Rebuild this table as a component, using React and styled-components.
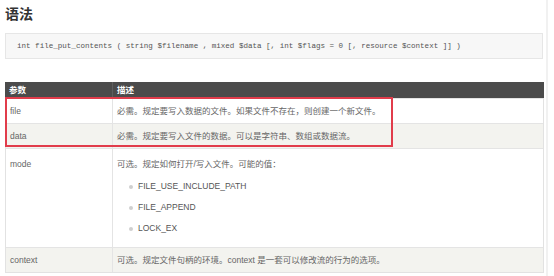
import React from 'react'
import styled, { createGlobalStyle } from 'styled-components'

const GlobalStyle = createGlobalStyle`
    html, body {
        margin: 0;
        padding: 0;
        background: #fff;
    }
    body {
        font-family: "Liberation Sans", "Noto Sans CJK SC", sans-serif;
        color: #555;
    }
`

const params = [
    { name: 'file', desc: '必需。规定要写入数据的文件。如果文件不存在，则创建一个新文件。' },
    { name: 'data', desc: '必需。规定要写入文件的数据。可以是字符串、数组或数据流。' },
    {
        name: 'mode',
        desc: '可选。规定如何打开/写入文件。可能的值：',
        values: ['FILE_USE_INCLUDE_PATH', 'FILE_APPEND', 'LOCK_EX'],
    },
    { name: 'context', desc: '可选。规定文件句柄的环境。context 是一套可以修改流的行为的选项。' },
]

export default function App() {
    return (
        <Page>
            <GlobalStyle />
            <Main>
                <Title>语法</Title>
                <CodeBox>
                    int file_put_contents ( string $filename , mixed $data [, int $flags = 0 [, resource $context ]] )
                </CodeBox>
                <TableWrap>
                    <HeadRow>
                        <HeadCell>参数</HeadCell>
                        <HeadCell $divider>描述</HeadCell>
                    </HeadRow>
                    {params.map((p, i) => (
                        <Row key={p.name} $striped={i % 2 === 1}>
                            <Cell $tall={!!p.values}>{p.name}</Cell>
                            <Cell $tall={!!p.values} $divider>
                                {p.desc}
                                {p.values && (
                                    <ValueList>
                                        {p.values.map((v) => <li key={v}>{v}</li>)}
                                    </ValueList>
                                )}
                            </Cell>
                        </Row>
                    ))}
                    <Highlight />
                </TableWrap>
            </Main>
        </Page>
    )
}

const Page = styled.div`
    width: 554px;
    height: 276px;
    display: flex;
    overflow: hidden;
`

const Main = styled.div`
    width: 548px;
    box-sizing: border-box;
    padding: 5px 3px 0 5px;
    border-right: 2px solid #f1f1f1;
`

const Title = styled.h2`
    margin: 0;
    font-size: 14px;
    line-height: 16px;
    font-weight: bold;
    color: #333;
    font-family: "Noto Sans CJK SC", sans-serif;
`

const CodeBox = styled.div`
    margin-top: 12px;
    height: 26px;
    box-sizing: border-box;
    border: 1px solid #e6e6e6;
    background: #f7f7f7;
    padding-left: 11px;
    font-family: "Liberation Mono", monospace;
    font-size: 7.55px;
    line-height: 24px;
    color: #555;
    white-space: nowrap;
`

const TableWrap = styled.div`
    position: relative;
    margin-top: 23px;
    width: 539px;
    border: 1px solid #e2e2e2;
    border-top: none;
    box-sizing: border-box;
`

const HeadRow = styled.div`
    display: grid;
    grid-template-columns: 107px 1fr;
    height: 16px;
    margin: 0 -1px;
    background: #4b4b4b;
`

const HeadCell = styled.div`
    padding: 0 4px;
    font-size: 8.5px;
    line-height: 16px;
    font-weight: bold;
    color: #fff;
    border-left: ${p => (p.$divider ? '1px solid #5e5e5e' : 'none')};
`

const Row = styled.div`
    display: grid;
    grid-template-columns: 106px 1fr;
    border-top: 1px solid #e4e4e4;
    background: ${p => (p.$striped ? '#f3f3ef' : '#fff')};
    font-size: 8.5px;
    &:last-of-type > div {
        line-height: 25px;
    }
`

const Cell = styled.div`
    color: #666;
    line-height: ${p => (p.$tall ? '14px' : '24px')};
    padding: ${p => (p.$tall ? '8px 4px' : '0 4px')};
    border-left: ${p => (p.$divider ? '1px solid #e4e4e4' : 'none')};
`

const ValueList = styled.ul`
    list-style: none;
    margin: 5px 0 0;
    padding: 0 0 0 21px;
    li {
        position: relative;
        line-height: 21px;
        color: #555;
    }
    li::before {
        content: '';
        position: absolute;
        left: -9px;
        top: 9px;
        width: 4px;
        height: 4px;
        border-radius: 50%;
        background: #cfcfcf;
    }
`

const Highlight = styled.div`
    position: absolute;
    left: -1px;
    top: 15px;
    width: 388px;
    height: 50px;
    box-sizing: border-box;
    border: 2px solid #e13c4b;
    pointer-events: none;
`
